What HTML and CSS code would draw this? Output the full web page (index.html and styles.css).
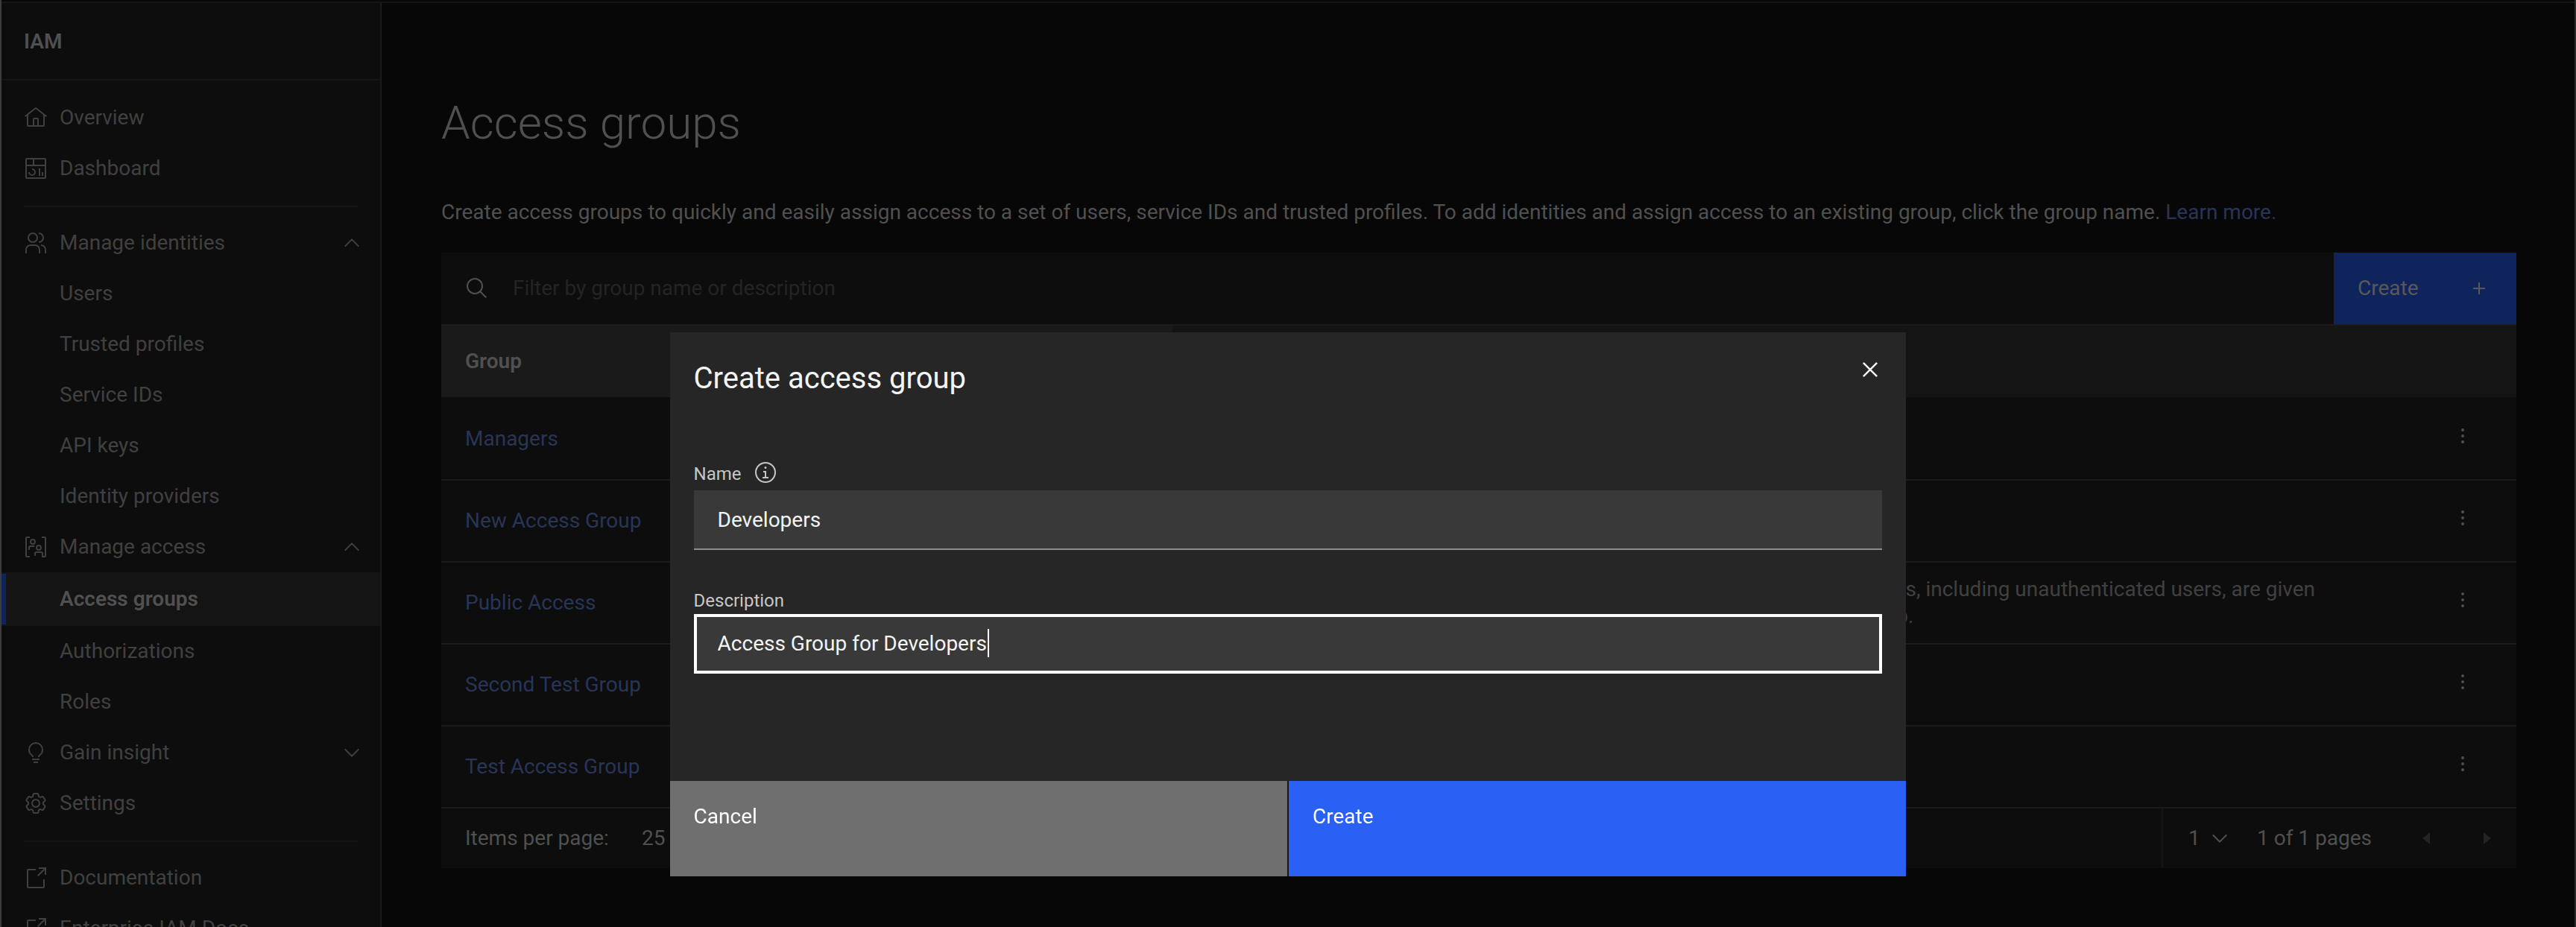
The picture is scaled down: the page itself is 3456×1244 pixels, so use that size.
FILE: index.html
```
<!DOCTYPE html>
<html lang="en">

<head>
  <meta charset="UTF-8">
  <meta name="viewport" content="width=device-width, initial-scale=1.0">
  <title>Access groups - IAM</title>
  <link rel="stylesheet" href="styles.css">
</head>

<body>
  <div class="page">
    <nav class="sidenav">
      <div class="sidenav__title">IAM</div>
      <ul class="sidenav__list">
        <li><a href="#" class="sidenav__item">
          <svg class="icon" viewBox="0 0 32 32"><path d="M16.612 2.214a1.01 1.01 0 0 0-1.242 0L1 13.419l1.243 1.572L4 13.621V26a2.004 2.004 0 0 0 2 2h20a2.004 2.004 0 0 0 2-2V13.63L29.757 15 31 13.428zM18 26h-4v-8h4zm2 0v-8a2.002 2.002 0 0 0-2-2h-4a2.002 2.002 0 0 0-2 2v8H6V12.062l10-7.79 10 7.8V26z"/></svg>
          Overview</a></li>
        <li><a href="#" class="sidenav__item">
          <svg class="icon" viewBox="0 0 32 32"><path d="M24 21h2v5h-2zM20 16h2v10h-2zM11 26a5.006 5.006 0 0 1-5-5h2a3 3 0 1 0 3-3v-2a5 5 0 0 1 0 10z"/><path d="M28 2H4a2.002 2.002 0 0 0-2 2v24a2.002 2.002 0 0 0 2 2h24a2.003 2.003 0 0 0 2-2V4a2.002 2.002 0 0 0-2-2zm0 9H14V4h14zM12 4v7H4V4zM4 28V13h24v15z"/></svg>
          Dashboard</a></li>
        <li class="sidenav__divider"></li>
        <li>
          <button class="sidenav__item" aria-expanded="true">
            <svg class="icon" viewBox="0 0 32 32"><path d="M30 30h-2v-5a5.006 5.006 0 0 0-5-5v-2a7.008 7.008 0 0 1 7 7zM22 30h-2v-5a5.006 5.006 0 0 0-5-5H9a5.006 5.006 0 0 0-5 5v5H2v-5a7.008 7.008 0 0 1 7-7h6a7.008 7.008 0 0 1 7 7zM20 2v2a5 5 0 0 1 0 10v2a7 7 0 0 0 0-14zM12 4a5 5 0 1 1-5 5 5 5 0 0 1 5-5m0-2a7 7 0 1 0 7 7 7 7 0 0 0-7-7z"/></svg>
            Manage identities
            <svg class="chevron" viewBox="0 0 32 32"><path d="M16 10l10 10-1.400 1.400L16 12.800l-8.600 8.600L6 20z"/></svg>
          </button>
          <ul>
            <li><a href="#" class="sidenav__item sidenav__item--sub">Users</a></li>
            <li><a href="#" class="sidenav__item sidenav__item--sub">Trusted profiles</a></li>
            <li><a href="#" class="sidenav__item sidenav__item--sub">Service IDs</a></li>
            <li><a href="#" class="sidenav__item sidenav__item--sub">API keys</a></li>
            <li><a href="#" class="sidenav__item sidenav__item--sub">Identity providers</a></li>
          </ul>
        </li>
        <li>
          <button class="sidenav__item" aria-expanded="true">
            <svg class="icon" viewBox="0 0 32 32"><path d="M28 30h-4v-2h4V4h-4V2h4a2.002 2.002 0 0 1 2 2v24a2.002 2.002 0 0 1-2 2zM8 30H4a2.002 2.002 0 0 1-2-2V4a2.002 2.002 0 0 1 2-2h4v2H4v24h4zM20 13a4 4 0 1 0 0 8 4 4 0 0 0 0-8zm0 6a2 2 0 1 1 0-4 2 2 0 0 1 0 4zM26 28h-2v-3a1 1 0 0 0-1-1h-6a1 1 0 0 0-1 1v3h-2v-3a3 3 0 0 1 3-3h6a3 3 0 0 1 3 3zM12 5a4 4 0 1 0 0 8 4 4 0 0 0 0-8zm0 6a2 2 0 1 1 0-4 2 2 0 0 1 0 4zM8 20H6v-3a3 3 0 0 1 3-3h5v2H9a1 1 0 0 0-1 1z"/></svg>
            Manage access
            <svg class="chevron" viewBox="0 0 32 32"><path d="M16 10l10 10-1.400 1.400L16 12.800l-8.600 8.600L6 20z"/></svg>
          </button>
          <ul>
            <li><a href="#" class="sidenav__item sidenav__item--sub sidenav__item--active">Access groups</a></li>
            <li><a href="#" class="sidenav__item sidenav__item--sub">Authorizations</a></li>
            <li><a href="#" class="sidenav__item sidenav__item--sub">Roles</a></li>
          </ul>
        </li>
        <li>
          <button class="sidenav__item" aria-expanded="false">
            <svg class="icon" viewBox="0 0 32 32"><path d="M11 24h10v2H11zM13 28h6v2h-6zM16 2A10 10 0 0 0 6 12a9.190 9.190 0 0 0 3.460 7.620c1 .93 1.540 1.460 1.540 2.380h2c0-1.840-1.110-2.870-2.190-3.860A7.200 7.200 0 0 1 8 12a8 8 0 0 1 16 0 7.200 7.200 0 0 1-2.820 6.140c-1.070 1-2.180 2-2.180 3.860h2c0-.92.530-1.450 1.540-2.390A9.180 9.180 0 0 0 26 12 10 10 0 0 0 16 2z"/></svg>
            Gain insight
            <svg class="chevron" viewBox="0 0 32 32"><path d="M16 22L6 12l1.400-1.400 8.600 8.600 8.600-8.600L26 12z"/></svg>
          </button>
        </li>
        <li><a href="#" class="sidenav__item">
          <svg class="icon" viewBox="0 0 32 32"><path d="M27 16.760v-1.530l1.920-1.680A2 2 0 0 0 29.300 11l-2.360-4a2 2 0 0 0-1.730-1 2 2 0 0 0-.640.100l-2.430.820a11.350 11.350 0 0 0-1.310-.750l-.510-2.520a2 2 0 0 0-2-1.610h-4.680a2 2 0 0 0-2 1.610l-.510 2.520a11.480 11.480 0 0 0-1.320.750l-2.380-.860A2 2 0 0 0 6.790 6a2 2 0 0 0-1.730 1L2.700 11a2 2 0 0 0 .410 2.510L5 15.240v1.530l-1.890 1.680A2 2 0 0 0 2.700 21l2.360 4a2 2 0 0 0 1.730 1 2 2 0 0 0 .640-.100l2.430-.820a11.350 11.350 0 0 0 1.310.750l.510 2.520a2 2 0 0 0 2 1.610h4.720a2 2 0 0 0 2-1.610l.510-2.520a11.480 11.480 0 0 0 1.320-.750l2.420.820a2 2 0 0 0 .640.100 2 2 0 0 0 1.730-1l2.280-4a2 2 0 0 0-.410-2.510zM25.210 24l-3.430-1.160a8.860 8.860 0 0 1-2.710 1.570L18.360 28h-4.720l-.710-3.550a9.360 9.360 0 0 1-2.700-1.570L6.790 24l-2.360-4 2.720-2.400a8.900 8.900 0 0 1 0-3.130L4.430 12l2.360-4 3.430 1.160a8.860 8.860 0 0 1 2.710-1.570L13.640 4h4.720l.710 3.550a9.360 9.360 0 0 1 2.700 1.570L25.210 8l2.360 4-2.720 2.400a8.900 8.900 0 0 1 0 3.130L27.570 20z"/><path d="M16 22a6 6 0 1 1 6-6 5.940 5.940 0 0 1-6 6zm0-10a3.910 3.910 0 0 0-4 4 3.910 3.910 0 0 0 4 4 3.910 3.910 0 0 0 4-4 3.910 3.910 0 0 0-4-4z"/></svg>
          Settings</a></li>
        <li class="sidenav__divider"></li>
        <li><a href="#" class="sidenav__item">
          <svg class="icon" viewBox="0 0 32 32"><path d="M26 30H6a2.003 2.003 0 0 1-2-2V6a2.003 2.003 0 0 1 2-2h10v2H6v22h20V18h2v10a2.003 2.003 0 0 1-2 2z"/><path d="M20 2v2h6.600L18 12.600l1.400 1.400L28 5.400V12h2V2z"/></svg>
          Documentation</a></li>
        <li><a href="#" class="sidenav__item">
          <svg class="icon" viewBox="0 0 32 32"><path d="M26 30H6a2.003 2.003 0 0 1-2-2V6a2.003 2.003 0 0 1 2-2h10v2H6v22h20V18h2v10a2.003 2.003 0 0 1-2 2z"/><path d="M20 2v2h6.600L18 12.600l1.400 1.400L28 5.400V12h2V2z"/></svg>
          Enterprise IAM Docs</a></li>
      </ul>
    </nav>

    <main class="content">
      <h1>Access groups</h1>
      <p class="content__intro">Create access groups to quickly and easily assign access to a set of users, service IDs and trusted profiles. To add identities and assign access to an existing group, click the group name. <a href="#">Learn more.</a></p>

      <div class="toolbar">
        <label class="toolbar__search">
          <svg class="icon" viewBox="0 0 32 32"><path d="M29 27.586l-7.552-7.552a11.018 11.018 0 1 0-1.414 1.414L27.586 29zM4 13a9 9 0 1 1 9 9 9.010 9.010 0 0 1-9-9z"/></svg>
          <input type="search" placeholder="Filter by group name or description" aria-label="Filter">
        </label>
        <button class="toolbar__create">Create
          <svg class="icon" viewBox="0 0 32 32"><path d="M17 15V8h-2v7H8v2h7v7h2v-7h7v-2z"/></svg>
        </button>
      </div>

      <table class="groups">
        <thead>
          <tr>
            <th class="groups__name">Group</th>
            <th class="groups__description" aria-label="Description"></th>
            <th class="groups__menu" aria-label="Actions"></th>
          </tr>
        </thead>
        <tbody>
          <tr>
            <td><a href="#">Managers</a></td>
            <td></td>
            <td><button class="overflow" aria-label="Options"><svg class="icon" viewBox="0 0 32 32"><circle cx="16" cy="8" r="2"/><circle cx="16" cy="16" r="2"/><circle cx="16" cy="24" r="2"/></svg></button></td>
          </tr>
          <tr>
            <td><a href="#">New Access Group</a></td>
            <td></td>
            <td><button class="overflow" aria-label="Options"><svg class="icon" viewBox="0 0 32 32"><circle cx="16" cy="8" r="2"/><circle cx="16" cy="16" r="2"/><circle cx="16" cy="24" r="2"/></svg></button></td>
          </tr>
          <tr>
            <td><a href="#">Public Access</a></td>
            <td><div class="groups__text">The Public Access group is a default group. All users and service IDs, including unauthenticated users, are given<br>access to resources by the policies that are set in this access group.</div></td>
            <td><button class="overflow" aria-label="Options"><svg class="icon" viewBox="0 0 32 32"><circle cx="16" cy="8" r="2"/><circle cx="16" cy="16" r="2"/><circle cx="16" cy="24" r="2"/></svg></button></td>
          </tr>
          <tr>
            <td><a href="#">Second Test Group</a></td>
            <td></td>
            <td><button class="overflow" aria-label="Options"><svg class="icon" viewBox="0 0 32 32"><circle cx="16" cy="8" r="2"/><circle cx="16" cy="16" r="2"/><circle cx="16" cy="24" r="2"/></svg></button></td>
          </tr>
          <tr>
            <td><a href="#">Test Access Group</a></td>
            <td></td>
            <td><button class="overflow" aria-label="Options"><svg class="icon" viewBox="0 0 32 32"><circle cx="16" cy="8" r="2"/><circle cx="16" cy="16" r="2"/><circle cx="16" cy="24" r="2"/></svg></button></td>
          </tr>
        </tbody>
      </table>

      <div class="pagination">
        <label for="page-size">Items per page:</label>
        <select id="page-size">
          <option>25</option>
        </select>
        <div class="pagination__right">
          <div class="pagination__page">
            <select aria-label="Page">
              <option>1</option>
            </select>
            <svg class="chevron" viewBox="0 0 32 32"><path d="M16 22L6 12l1.400-1.400 8.600 8.600 8.600-8.600L26 12z"/></svg>
          </div>
          <span>1 of 1 pages</span>
          <div class="pagination__arrows">
            <button disabled aria-label="Previous page"><svg class="icon" viewBox="0 0 32 32"><path d="M20 24L10 16l10-8z"/></svg></button>
            <button disabled aria-label="Next page"><svg class="icon" viewBox="0 0 32 32"><path d="M12 8l10 8-10 8z"/></svg></button>
          </div>
        </div>
      </div>
    </main>
  </div>

  <div class="overlay">
    <form class="modal" role="dialog" aria-labelledby="modal-title">
      <header class="modal__header">
        <h2 id="modal-title">Create access group</h2>
        <button type="button" class="modal__close" aria-label="Close"><svg viewBox="0 0 32 32"><path d="M24 9.400L22.600 8 16 14.600 9.400 8 8 9.400l6.600 6.600L8 22.600 9.400 24l6.600-6.600 6.600 6.600 1.400-1.400-6.600-6.600z"/></svg></button>
      </header>
      <div class="modal__body">
        <div class="field">
          <div class="field__label field__label--info">
            <label for="name">Name</label>
            <svg class="icon" viewBox="0 0 32 32"><path d="M17 22v-8h-4v2h2v6h-3v2h8v-2zM16 8a1.500 1.500 0 1 0 1.500 1.500A1.500 1.500 0 0 0 16 8z"/><path d="M16 30a14 14 0 1 1 14-14 14 14 0 0 1-14 14zm0-26a12 12 0 1 0 12 12A12 12 0 0 0 16 4z"/></svg>
          </div>
          <input type="text" id="name" value="Developers">
        </div>
        <div class="field">
          <div class="field__label">
            <label for="description">Description</label>
          </div>
          <input type="text" id="description" value="Access Group for Developers" autofocus>
        </div>
      </div>
      <footer class="modal__footer">
        <button type="button" class="modal__cancel">Cancel</button>
        <button type="submit" class="modal__submit">Create</button>
      </footer>
    </form>
  </div>
</body>

</html>
```
FILE: styles.css
```
*,
*::before,
*::after {
  box-sizing: border-box;
}

body {
  margin: 0;
  height: 100vh;
  overflow: hidden;
  background-color: #070707;
  color: #505050;
  font-family: Roboto, "Liberation Sans", sans-serif;
  font-size: 28px;
  line-height: 36px;
}

h1,
h2,
p,
ul {
  margin: 0;
  padding: 0;
  font-weight: 400;
}

ul {
  list-style: none;
}

a {
  color: #283557;
  text-decoration: none;
}

button,
input,
select {
  margin: 0;
  padding: 0;
  border: 0;
  border-radius: 0;
  background-color: transparent;
  color: inherit;
  font: inherit;
  outline: none;
  appearance: none;
  text-align: left;
}

svg {
  display: block;
  flex: none;
  fill: currentColor;
}

.icon,
.chevron {
  width: 32px;
  height: 32px;
}

.page {
  display: flex;
  height: 100vh;
  padding-top: 4px;
  border-right: 2px solid #2b2b2b;
  border-left: 2px solid #3d3d3d;
  background-image: linear-gradient(#070707 2px, #141414 2px, #141414 4px, transparent 4px);
}

/* Side navigation */

.sidenav {
  flex: none;
  width: 510px;
  overflow: hidden;
  border-right: 2px solid #1b1b1b;
  background-color: #0d0d0d;
}

.sidenav__title {
  height: 104px;
  padding: 34px 30px;
  border-bottom: 2px solid #141414;
  color: #505050;
  font-weight: 600;
}

.sidenav__list {
  padding-top: 16px;
}

.sidenav__item {
  display: flex;
  align-items: center;
  gap: 16px;
  width: 100%;
  height: 68px;
  padding: 0 22px 0 30px;
  color: #404040;
}

.sidenav__item .chevron {
  margin-left: auto;
}

.sidenav__item--sub {
  padding-left: 78px;
}

.sidenav__item--active {
  height: 72px;
  border-top: 2px solid #141414;
  border-bottom: 2px solid #141414;
  background-color: #141414;
  box-shadow: inset 6px 0 #10245c;
  color: #505050;
  font-weight: 600;
}

.sidenav__divider {
  height: 2px;
  margin: 16px 30px 14px;
  background-color: #141414;
}

/* Content */

.content {
  flex: 1;
  min-width: 0;
  padding: 121px 78px 0 80px;
}

h1 {
  font-size: 62px;
  font-weight: 300;
  line-height: 80px;
}

.content__intro {
  margin: 62px 0 36px;
}

.toolbar {
  display: flex;
  height: 96px;
  background-color: #0d0d0d;
}

.toolbar__search {
  display: flex;
  flex: 1;
  align-items: center;
  gap: 32px;
  padding-left: 32px;
}

.toolbar__search input {
  flex: 1;
}

.toolbar__search input::placeholder {
  color: #242424;
  opacity: 1;
}

.toolbar__create {
  display: flex;
  align-items: center;
  justify-content: space-between;
  width: 245px;
  padding: 0 34px 0 32px;
  background-color: #10245c;
  color: #585858;
}

.groups {
  width: 100%;
  border-spacing: 0;
  table-layout: fixed;
  background-color: #0d0d0d;
  text-align: left;
}

.groups th {
  height: 100px;
  padding: 0 32px;
  border-top: 2px solid #1b1b1b;
  border-bottom: 2px solid #0d0d0d;
  background-color: #141414;
  font-weight: 600;
}

.groups .groups__name {
  width: 35.25%;
  background-color: #1a1a1a;
}

.groups__menu {
  width: 144px;
}

.groups td {
  height: 110px;
  padding: 0 32px;
  border-bottom: 2px solid #1b1b1b;
  color: #404040;
}

.groups__text {
  float: right;
  width: max-content;
  margin-right: 94px;
}

.overflow {
  display: block;
  margin: 0 0 8px 24px;
  color: #505050;
}

.pagination {
  display: flex;
  align-items: center;
  height: 80px;
  padding-left: 32px;
  background-color: #0d0d0d;
}

.pagination label {
  margin-right: 44px;
}

.pagination__right {
  display: flex;
  align-items: center;
  gap: 34px;
  height: 100%;
  margin-left: auto;
  padding-left: 34px;
  border-left: 2px solid #141414;
}

.pagination__page {
  display: flex;
  align-items: center;
  gap: 10px;
}

.pagination__arrows {
  display: flex;
}

.pagination button {
  width: 80px;
  padding: 0 24px;
  color: #242424;
}

/* Modal */

.overlay {
  position: fixed;
  inset: 0;
  display: flex;
  align-items: flex-start;
  justify-content: center;
  padding-top: 446px;
}

.modal {
  width: 48%;
  background-color: #262626;
  color: #f4f4f4;
}

.modal__header {
  display: flex;
  justify-content: space-between;
  padding-left: 32px;
}

.modal__header h2 {
  padding-top: 36px;
  font-size: 40px;
  line-height: 52px;
}

.modal__close {
  width: 96px;
  height: 96px;
  padding: 30px 28px 26px;
}

.modal__body {
  padding: 76px 32px 144px;
}

.field + .field {
  margin-top: 50px;
}

.field__label {
  display: flex;
  align-items: flex-start;
  gap: 16px;
  height: 36px;
  color: #c6c6c6;
  font-size: 24px;
}

.field__label--info {
  height: 40px;
}

.modal__close svg {
  width: 40px;
  height: 40px;
}

.field input {
  display: block;
  width: 100%;
  height: 80px;
  padding: 0 32px;
  border-bottom: 2px solid #8d8d8d;
  background-color: #393939;
  color: #f4f4f4;
}

/* thin text cursor after the typed value */
.field input:focus {
  border-bottom-color: transparent;
  outline: 4px solid #fff;
  outline-offset: -4px;
  background-image: linear-gradient(#fff, #fff);
  background-position: 394px center;
  background-repeat: no-repeat;
  background-size: 2px 38px;
  caret-color: transparent;
}

.modal__footer {
  display: grid;
  grid-template-columns: 1fr 1fr;
  gap: 2px;
  background-color: #161616;
}

.modal__footer button {
  height: 128px;
  padding: 30px 32px 62px;
  background-color: #6f6f6f;
  color: #fff;
}

.modal__footer .modal__submit {
  background-color: #2b60f5;
}
```
